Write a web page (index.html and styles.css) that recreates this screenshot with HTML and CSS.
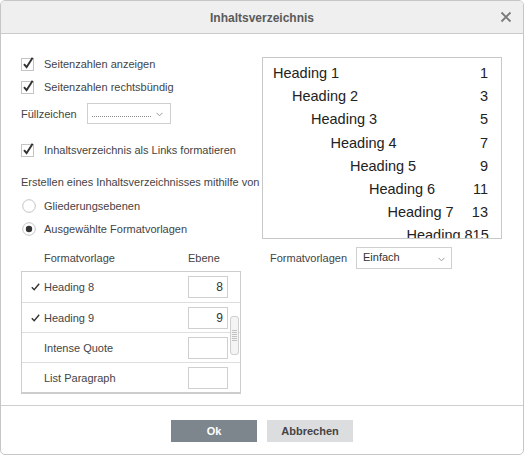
FILE: index.html
```html
<!DOCTYPE html>
<html lang="de">
<head>
<meta charset="utf-8">
<title>Inhaltsverzeichnis</title>
<link rel="stylesheet" href="styles.css">
</head>
<body>
<div class="dialog">
  <div class="header">
    <span></span>
    <div class="title">Inhaltsverzeichnis</div>
    <div class="close">
      <svg width="12" height="12" viewBox="0 0 12 12"><path d="M1.5 1.5 L10.5 10.5 M10.5 1.5 L1.5 10.5" stroke="#7a7a7a" stroke-width="1.8" fill="none"/></svg>
    </div>
  </div>
  <div class="body">
    <div class="options">
      <div class="check-row r1">
        <svg class="cb" width="14" height="14" viewBox="0 0 14 14"><rect x="0.5" y="1.5" width="12" height="12" fill="#fff" stroke="#c4c4c4"/><path d="M3 7.2 L5.6 10.2 L11.6 0.8" stroke="#333" stroke-width="2" fill="none"/></svg>
        <span>Seitenzahlen anzeigen</span>
      </div>
      <div class="check-row r2">
        <svg class="cb" width="14" height="14" viewBox="0 0 14 14"><rect x="0.5" y="1.5" width="12" height="12" fill="#fff" stroke="#c4c4c4"/><path d="M3 7.2 L5.6 10.2 L11.6 0.8" stroke="#333" stroke-width="2" fill="none"/></svg>
        <span>Seitenzahlen rechtsbündig</span>
      </div>
      <div class="fill-row">
        <span class="fill-label">Füllzeichen</span>
        <div class="select fill-select">
          <span class="dots"></span>
          <svg class="chev" width="7" height="5" viewBox="0 0 7 5"><path d="M0.5 0.8 L3.5 3.8 L6.5 0.8" stroke="#9a9a9a" fill="none"/></svg>
        </div>
      </div>
      <div class="check-row r3">
        <svg class="cb" width="14" height="14" viewBox="0 0 14 14"><rect x="0.5" y="1.5" width="12" height="12" fill="#fff" stroke="#c4c4c4"/><path d="M3 7.2 L5.6 10.2 L11.6 0.8" stroke="#333" stroke-width="2" fill="none"/></svg>
        <span>Inhaltsverzeichnis als Links formatieren</span>
      </div>
      <div class="text-row">Erstellen eines Inhaltsverzeichnisses mithilfe von</div>
      <div class="check-row r4">
        <svg class="rb" width="14" height="14" viewBox="0 0 14 14"><circle cx="7" cy="7" r="6.3" fill="#fff" stroke="#c4c4c4"/></svg>
        <span>Gliederungsebenen</span>
      </div>
      <div class="check-row r5">
        <svg class="rb" width="14" height="14" viewBox="0 0 14 14"><circle cx="7" cy="7" r="6.3" fill="#fff" stroke="#c4c4c4"/><circle cx="7" cy="7" r="3.2" fill="#333"/></svg>
        <span>Ausgewählte Formatvorlagen</span>
      </div>
    </div>
    <div class="preview">
      <div class="pline l1"><span>Heading 1</span><span>1</span></div>
      <div class="pline l2"><span>Heading 2</span><span>3</span></div>
      <div class="pline l3"><span>Heading 3</span><span>5</span></div>
      <div class="pline l4"><span>Heading 4</span><span>7</span></div>
      <div class="pline l5"><span>Heading 5</span><span>9</span></div>
      <div class="pline l6"><span>Heading 6</span><span>11</span></div>
      <div class="pline l7"><span>Heading 7</span><span>13</span></div>
      <div class="pline l8"><span>Heading 8</span><span>15</span></div>
    </div>
    <div class="styles">
      <div class="thead">
        <span class="th-name">Formatvorlage</span>
        <span class="th-level">Ebene</span>
      </div>
      <div class="table">
        <div class="trow">
          <span class="tick"><svg width="9" height="8" viewBox="0 0 9 8"><path d="M0.8 4.2 L3.2 6.8 L8.2 0.8" stroke="#333" stroke-width="1.4" fill="none"/></svg></span>
          <span class="tname">Heading 8</span>
          <div class="num">8</div>
        </div>
        <div class="trow">
          <span class="tick"><svg width="9" height="8" viewBox="0 0 9 8"><path d="M0.8 4.2 L3.2 6.8 L8.2 0.8" stroke="#333" stroke-width="1.4" fill="none"/></svg></span>
          <span class="tname">Heading 9</span>
          <div class="num">9</div>
        </div>
        <div class="trow">
          <span class="tick"></span>
          <span class="tname">Intense Quote</span>
          <div class="num"></div>
        </div>
        <div class="trow">
          <span class="tick"></span>
          <span class="tname">List Paragraph</span>
          <div class="num"></div>
        </div>
        <div class="scrollbar"><span class="grip"></span></div>
      </div>
    </div>
    <div class="style-pick">
      <span class="sp-label">Formatvorlagen</span>
      <div class="select style-select">
        <span class="sel-text">Einfach</span>
        <svg class="chev" width="7" height="5" viewBox="0 0 7 5"><path d="M0.5 0.8 L3.5 3.8 L6.5 0.8" stroke="#9a9a9a" fill="none"/></svg>
      </div>
    </div>
  </div>
  <div class="footer">
    <div class="btn ok">Ok</div>
    <div class="btn cancel">Abbrechen</div>
  </div>
</div>
</body>
</html>
```

FILE: styles.css
```css
* { box-sizing: border-box; }
html, body { margin: 0; padding: 0; background: #fff; }
body {
  font-family: "Liberation Sans", Arial, sans-serif;
  font-size: 11px;
  color: #444;
}
.dialog {
  width: 524px;
  height: 455px;
  border: 1px solid #c6c6c6;
  border-radius: 5px;
  overflow: hidden;
  display: flex;
  flex-direction: column;
  background: #fff;
}
.header {
  height: 33px;
  flex: none;
  background: #efefef;
  border-bottom: 1px solid #cbcbcb;
  display: grid;
  grid-template-columns: 1fr auto 1fr;
  align-items: center;
}
.title {
  font-size: 12px;
  font-weight: bold;
  color: #5a5a5a;
  padding-top: 1px;
}
.close {
  justify-self: end;
  padding-right: 11px;
  display: flex;
  align-items: center;
  height: 12px;
}
.body {
  flex: 1;
  padding: 20px 21px 0 20px;
  display: grid;
  grid-template-columns: 241px 240px;
  grid-template-rows: 185px auto;
  align-content: start;
}
.options { display: flex; flex-direction: column; }
.check-row {
  height: 20px;
  display: flex;
  align-items: center;
  white-space: nowrap;
}
.check-row svg { flex: none; overflow: visible; }
.cb { margin-right: 9px; margin-top: -1px; }
.rb { margin-left: 1px; margin-right: 8px; }
.r2 { margin-top: 3px; }
.r3 { margin-top: 16px; }
.r4 { margin-top: 4px; }
.r5 { margin-top: 3px; }
.fill-row {
  margin-top: 6px;
  height: 21px;
  display: flex;
  align-items: center;
}
.fill-label { width: 66px; flex: none; }
.select {
  border: 1px solid #cfcfcf;
  background: #fff;
  position: relative;
  display: flex;
  align-items: center;
}
.fill-select { width: 84px; height: 21px; }
.dots {
  display: block;
  width: 59px;
  margin-left: 4px;
  margin-top: 6px;
  border-bottom: 1px dotted #8a8a8a;
}
.chev { position: absolute; right: 7px; top: 8px; }
.text-row {
  margin-top: 12px;
  height: 20px;
  line-height: 20px;
  white-space: nowrap;
}
.preview {
  margin-top: 3px;
  height: 182px;
  border: 1px solid #c8c8c8;
  overflow: hidden;
  padding: 4px 13px 0 10px;
  font-size: 14.5px;
  color: #222;
}
.pline {
  height: 23.2px;
  line-height: 23.2px;
  display: flex;
  justify-content: space-between;
  white-space: nowrap;
}
.l2 { padding-left: 19px; }
.l3 { padding-left: 38px; }
.l4 { padding-left: 57.5px; }
.l5 { padding-left: 77px; }
.l6 { padding-left: 96px; }
.l7 { padding-left: 114.5px; }
.l8 { padding-left: 133.5px; }
.styles { display: flex; flex-direction: column; }
.thead {
  margin-top: 9px;
  height: 20px;
  display: flex;
  align-items: center;
}
.th-name { width: 167px; padding-left: 23px; }
.table {
  margin-top: 3px;
  width: 220px;
  border: 1px solid #cdcdcd;
  border-bottom: 2px solid #cdcdcd;
  position: relative;
}
.trow {
  height: 30px;
  display: flex;
  align-items: center;
  border-top: 1px solid #dedede;
}
.trow:first-child { border-top: none; }
.tick {
  width: 22px;
  flex: none;
  padding-left: 9px;
  display: flex;
  align-items: center;
}
.tname { flex: 1; }
.num {
  width: 40px;
  height: 22px;
  margin-right: 12px;
  border: 1px solid #cfcfcf;
  text-align: right;
  padding-right: 4px;
  font-size: 12px;
  line-height: 20px;
  color: #333;
}
.scrollbar {
  position: absolute;
  right: 1px;
  top: 44px;
  width: 9px;
  height: 39px;
  border: 1px solid #cfcfcf;
  border-radius: 3px;
  background: #f4f4f4;
  display: flex;
  align-items: center;
  justify-content: center;
}
.grip {
  display: block;
  width: 5px;
  height: 11px;
  background: repeating-linear-gradient(to bottom, #c2c2c2 0 1px, transparent 1px 2px);
}
.style-pick {
  margin-top: 8px;
  padding-left: 8px;
  display: flex;
  align-items: flex-start;
}
.sp-label { height: 22px; line-height: 22px; width: 86px; flex: none; }
.style-select { width: 96px; height: 22px; }
.sel-text { padding-left: 6px; margin-top: -2px; color: #333; }
.style-select .chev { top: 9px; right: 6px; }
.footer {
  height: 49px;
  flex: none;
  border-top: 1px solid #cfcfcf;
  display: flex;
  justify-content: center;
  gap: 10px;
  padding-top: 14px;
}
.btn {
  width: 86px;
  height: 22px;
  line-height: 22px;
  text-align: center;
  font-weight: bold;
  font-size: 11px;
}
.ok { background: #7d868c; color: #fff; }
.cancel { background: #dcdddf; color: #444; }
```
